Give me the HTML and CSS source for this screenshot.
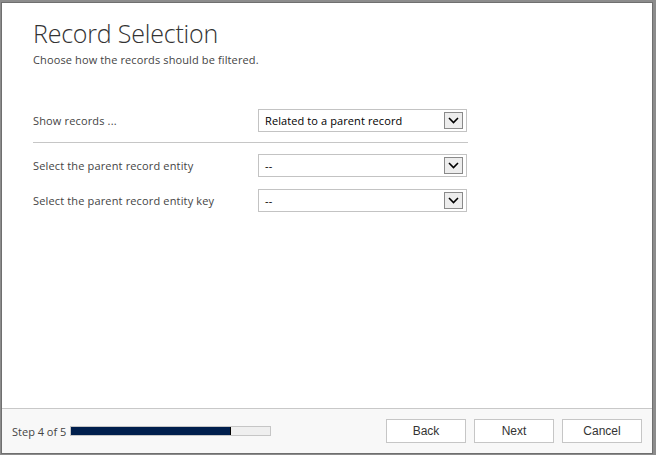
FILE: index.html
```html
<!DOCTYPE html>
<html>
<head>
<meta charset="utf-8">
<link rel="stylesheet" href="styles.css">
</head>
<body>
<div class="dialog">
  <div class="content">
    <h1 class="title">Record Selection</h1>
    <p class="subtitle">Choose how the records should be filtered.</p>
    <div class="row row-first">
      <label class="label">Show records ...</label>
      <div class="select"><span class="value">Related to a parent record</span><span class="btn"><svg width="11" height="7" viewBox="0 0 11 7"><path d="M1 1 L5.5 5.5 L10 1" fill="none" stroke="#000" stroke-width="1.6"/></svg></span></div>
    </div>
    <div class="divider"></div>
    <div class="row">
      <label class="label">Select the parent record entity</label>
      <div class="select"><span class="value">--</span><span class="btn"><svg width="11" height="7" viewBox="0 0 11 7"><path d="M1 1 L5.5 5.5 L10 1" fill="none" stroke="#000" stroke-width="1.6"/></svg></span></div>
    </div>
    <div class="row">
      <label class="label">Select the parent record entity key</label>
      <div class="select"><span class="value">--</span><span class="btn"><svg width="11" height="7" viewBox="0 0 11 7"><path d="M1 1 L5.5 5.5 L10 1" fill="none" stroke="#000" stroke-width="1.6"/></svg></span></div>
    </div>
  </div>
  <div class="footer">
    <span class="step">Step 4 of 5</span>
    <div class="progress"><div class="fill" style="width:80%"></div></div>
    <div class="buttons">
      <button class="button">Back</button>
      <button class="button">Next</button>
      <button class="button">Cancel</button>
    </div>
  </div>
</div>
</body>
</html>
```
FILE: styles.css
```css
html, body {
  margin: 0;
  padding: 0;
}
body {
  background: #8c8c8c;
  width: 656px;
  height: 455px;
  padding: 2px 3px 1px 1px;
  box-sizing: border-box;
  font-family: "Open Sans", "Noto Sans", sans-serif;
}
.dialog {
  width: 652px;
  height: 452px;
  box-sizing: border-box;
  background: #fff;
  border: 1px solid #6f6f6f;
  display: flex;
  flex-direction: column;
}
.content {
  flex: 1;
  padding: 13px 0 0 31px;
}
.title {
  margin: 0;
  font-weight: 300;
  font-size: 25px;
  line-height: 34px;
  color: #333;
  letter-spacing: -0.2px;
}
.subtitle {
  margin: 2px 0 0 0;
  font-size: 11px;
  line-height: 16px;
  color: #444;
  letter-spacing: 0.12px;
}
.row {
  display: flex;
  align-items: center;
  width: 435px;
  margin-top: 12px;
}
.row-first {
  margin-top: 41px;
}
.label {
  width: 225px;
  font-size: 11px;
  color: #444;
  letter-spacing: 0.15px;
}
.select {
  width: 209px;
  height: 23px;
  box-sizing: border-box;
  border: 1px solid #c3c3c3;
  display: flex;
  align-items: center;
  justify-content: space-between;
  padding: 0 3px 0 6px;
}
.value {
  font-size: 11px;
  color: #000;
  letter-spacing: 0.1px;
}
.btn {
  width: 19px;
  height: 17px;
  box-sizing: border-box;
  border: 1px solid #8a8a8a;
  background: #ededed;
  display: flex;
  align-items: center;
  justify-content: center;
}
.divider {
  width: 435px;
  height: 1px;
  background: #c6c6c6;
  margin-top: 10px;
}
.row + .divider + .row {
  margin-top: 11px;
}
.footer {
  height: 44px;
  border-top: 1px solid #c8c8c8;
  background: #f8f8f8;
  display: flex;
  align-items: center;
  padding: 0 10px 0 10px;
}
.step {
  font-size: 11px;
  color: #444;
  margin-right: 4px;
}
.progress {
  width: 201px;
  height: 10px;
  box-sizing: border-box;
  border: 1px solid #c6c6c6;
  background: #efefef;
}
.fill {
  height: 100%;
  background: #001f4d;
  border-right: 1px solid #000;
  box-sizing: border-box;
}
.buttons {
  margin-left: auto;
  display: flex;
  gap: 8px;
}
.button {
  width: 80px;
  height: 24px;
  border: 1px solid #c6c6c6;
  background: #fff;
  font-family: "Liberation Sans", Arial, sans-serif;
  font-size: 12px;
  color: #333;
  padding: 0;
}
```
